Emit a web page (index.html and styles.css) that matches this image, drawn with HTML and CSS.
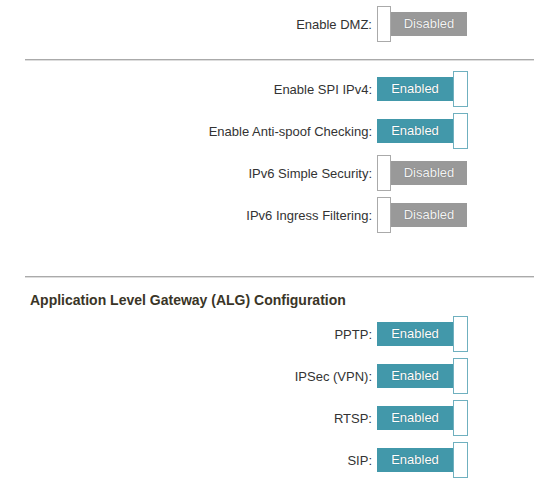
FILE: index.html
```html
<!DOCTYPE html>
<html>
<head>
<meta charset="utf-8">
<link rel="stylesheet" href="styles.css">
</head>
<body>
<div class="page">
  <div class="row">
    <div class="label">Enable DMZ:</div>
    <div class="toggle off"><span class="knob"></span><span class="bar">Disabled</span></div>
  </div>
  <div class="divider first"></div>
  <div class="row">
    <div class="label">Enable SPI IPv4:</div>
    <div class="toggle on"><span class="bar">Enabled</span><span class="knob"></span></div>
  </div>
  <div class="row">
    <div class="label">Enable Anti-spoof Checking:</div>
    <div class="toggle on"><span class="bar">Enabled</span><span class="knob"></span></div>
  </div>
  <div class="row">
    <div class="label">IPv6 Simple Security:</div>
    <div class="toggle off"><span class="knob"></span><span class="bar">Disabled</span></div>
  </div>
  <div class="row">
    <div class="label">IPv6 Ingress Filtering:</div>
    <div class="toggle off"><span class="knob"></span><span class="bar">Disabled</span></div>
  </div>
  <div class="divider second"></div>
  <h2 class="heading">Application Level Gateway (ALG) Configuration</h2>
  <div class="row">
    <div class="label">PPTP:</div>
    <div class="toggle on"><span class="bar">Enabled</span><span class="knob"></span></div>
  </div>
  <div class="row">
    <div class="label">IPSec (VPN):</div>
    <div class="toggle on"><span class="bar">Enabled</span><span class="knob"></span></div>
  </div>
  <div class="row">
    <div class="label">RTSP:</div>
    <div class="toggle on"><span class="bar">Enabled</span><span class="knob"></span></div>
  </div>
  <div class="row">
    <div class="label">SIP:</div>
    <div class="toggle on"><span class="bar">Enabled</span><span class="knob"></span></div>
  </div>
</div>
</body>
</html>
```
FILE: styles.css
```css
html, body {
  margin: 0;
  padding: 0;
  background: #ffffff;
}
body {
  font-family: "Liberation Sans", Arial, sans-serif;
  font-size: 13px;
  color: #333333;
}
.page {
  padding-top: 3px;
}
.row {
  display: flex;
  align-items: center;
  height: 42px;
}
.label {
  width: 372px;
  text-align: right;
  color: #333333;
}
.toggle {
  display: flex;
  align-items: center;
  margin-left: 5px;
}
.knob {
  box-sizing: border-box;
  width: 15px;
  height: 36px;
  background: #ffffff;
  border: 1px solid #aaaaaa;
}
.bar {
  width: 76px;
  height: 24px;
  line-height: 24px;
  text-align: center;
  font-size: 13px;
  text-shadow: 0 0 1px rgba(0, 0, 0, 0.35);
}
.on .bar {
  background: #4298aa;
  color: #ffffff;
}
.on .knob {
  border-color: #6fb0bf;
}
.off .knob {
  width: 14px;
}
.off .bar {
  background: #999999;
  color: #f4f4f4;
}
.divider {
  margin-left: 25px;
  border-top: 1px solid #aaaaaa;
  border-bottom: 1px solid #dddddd;
}
.divider.first {
  margin-top: 14px;
  margin-bottom: 7px;
}
.divider.second {
  margin-top: 40px;
}
.heading {
  margin: 12px 0 3px 30px;
  font-size: 14px;
  line-height: 20px;
  font-weight: bold;
  color: #3a3527;
}
```
